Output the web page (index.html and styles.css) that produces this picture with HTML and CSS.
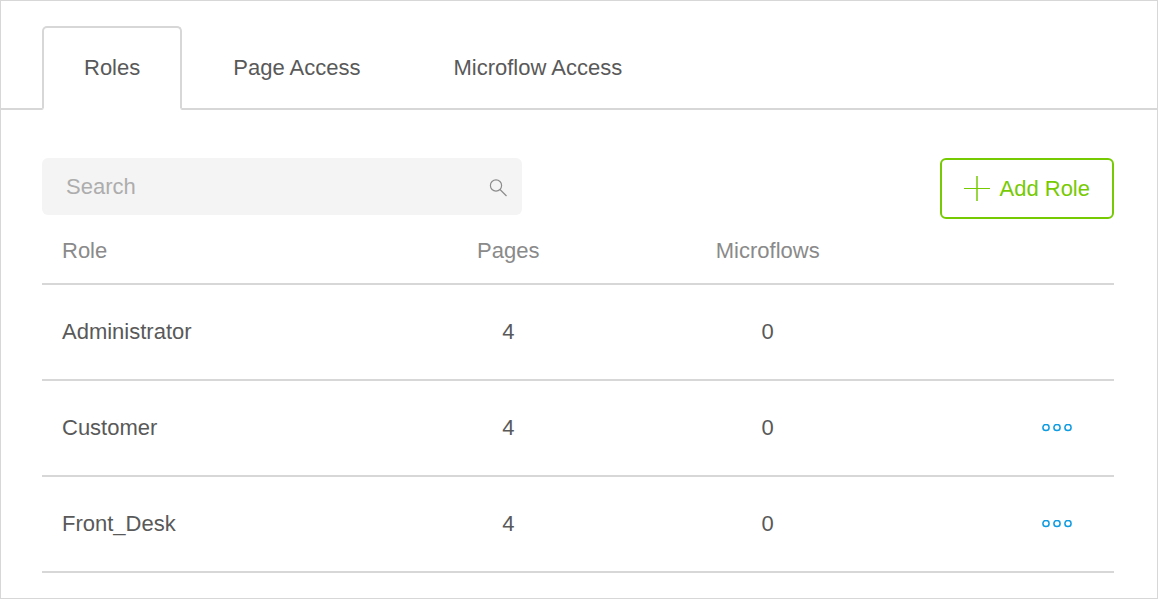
FILE: index.html
```html
<!DOCTYPE html>
<html lang="en">
<head>
<meta charset="utf-8">
<meta name="viewport" content="width=device-width, initial-scale=1">
<title>Roles</title>
<link rel="stylesheet" href="styles.css">
</head>
<body>
<main class="panel">
  <div class="tabs" role="tablist">
    <button class="tab tab-active" type="button" role="tab" aria-selected="true">Roles</button>
    <button class="tab" type="button" role="tab" aria-selected="false">Page Access</button>
    <button class="tab" type="button" role="tab" aria-selected="false">Microflow Access</button>
  </div>
  <section class="content">
    <div class="toolbar">
      <label class="search">
        <input class="search-input" type="search" placeholder="Search" aria-label="Search">
        <svg class="search-icon" width="18" height="18" viewBox="0 0 18 18" fill="none" stroke="#8c8c8c" aria-hidden="true">
          <circle cx="7" cy="7.5" r="5.6" stroke-width="1.2"/>
          <path d="M11 11.5L17.5 18" stroke-width="1.3"/>
        </svg>
      </label>
      <button class="add" type="button">
        <svg width="26" height="26" viewBox="0 0 26 26" fill="none" stroke="#76ca02" aria-hidden="true">
          <path d="M0 12.5H26" stroke-width="1"/>
          <path d="M13 0V25" stroke-width="1.5"/>
        </svg>
        <span>Add Role</span>
      </button>
    </div>
    <table class="roles">
      <thead>
        <tr><th class="name" scope="col">Role</th><th class="count" scope="col">Pages</th><th class="count" scope="col">Microflows</th><td class="actions"></td></tr>
      </thead>
      <tbody>
        <tr><td class="name">Administrator</td><td class="count">4</td><td class="count">0</td><td class="actions"></td></tr>
        <tr>
          <td class="name">Customer</td><td class="count">4</td><td class="count">0</td>
          <td class="actions"><button class="more" type="button" aria-label="Actions for Customer">
            <svg width="30" height="8" viewBox="0 0 30 8" fill="none" stroke="#0f9ce0" stroke-width="1.5" aria-hidden="true"><circle cx="4" cy="3.5" r="3.1"/><circle cx="15" cy="3.5" r="3.1"/><circle cx="26" cy="3.5" r="3.1"/></svg>
          </button></td>
        </tr>
        <tr>
          <td class="name">Front_Desk</td><td class="count">4</td><td class="count">0</td>
          <td class="actions"><button class="more" type="button" aria-label="Actions for Front_Desk">
            <svg width="30" height="8" viewBox="0 0 30 8" fill="none" stroke="#0f9ce0" stroke-width="1.5" aria-hidden="true"><circle cx="4" cy="3.5" r="3.1"/><circle cx="15" cy="3.5" r="3.1"/><circle cx="26" cy="3.5" r="3.1"/></svg>
          </button></td>
        </tr>
      </tbody>
    </table>
  </section>
</main>
</body>
</html>
```

FILE: styles.css
```css
* {
  box-sizing: border-box;
}

body {
  margin: 0;
  background: #fff;
  color: #595959;
  font: 22px/26px "Liberation Sans", Arial, sans-serif;
}

button,
input {
  font: inherit;
  color: inherit;
}

button {
  background: none;
  cursor: pointer;
}

.panel {
  min-height: 100vh;
  border: 1px solid #d7d7d7;
}

.tabs {
  display: flex;
  gap: 9px;
  padding: 25px 41px 0;
  border-bottom: 2px solid #d7d7d7;
}

.tab {
  min-width: 140px;
  margin-bottom: -2px;
  padding: 27px 40px 29px;
  border: 2px solid transparent;
  border-bottom: 0;
}

.tab-active {
  border-color: #d7d7d7;
  border-bottom: 2px solid #fff;
  border-radius: 5px 5px 2px 2px;
  padding-bottom: 27px;
  background: #fff;
}

.content {
  padding: 48px 43px 24px 41px;
}

.toolbar {
  display: flex;
  align-items: flex-start;
  justify-content: space-between;
  gap: 24px;
}

.search {
  display: flex;
  align-items: center;
  flex: 0 1 480px;
  height: 57px;
  padding: 0 15px 0 24px;
  border-radius: 6px;
  background: #f4f4f4;
}

.search-input {
  flex: 1;
  min-width: 0;
  padding: 0;
  border: 0;
  outline: 0;
  background: none;
  appearance: none;
}

.search-input::placeholder {
  color: #adadad;
  opacity: 1;
}

.search-icon {
  flex: none;
  overflow: visible;
}

.add {
  display: flex;
  align-items: center;
  gap: 9px;
  height: 61px;
  padding: 0 22px;
  border: 2px solid #76ca02;
  border-radius: 6px;
  color: #76ca02;
  white-space: nowrap;
}

.roles {
  width: 100%;
  table-layout: fixed;
  border-collapse: separate;
  border-spacing: 0;
}

.roles th,
.roles td {
  height: 96px;
  padding: 0;
  border-bottom: 2px solid #d7d7d7;
  font-weight: normal;
  text-align: center;
  vertical-align: middle;
}

.roles thead th,
.roles thead td {
  height: 66px;
  color: #8a8a8a;
}

.roles .name {
  width: 31.4%;
  padding-left: 20px;
  text-align: left;
}

.roles .count {
  width: 24.2%;
}

.roles .actions {
  padding-right: 42px;
}

.more {
  display: flex;
  margin-left: auto;
  padding: 8px 0;
  border: 0;
}
```
